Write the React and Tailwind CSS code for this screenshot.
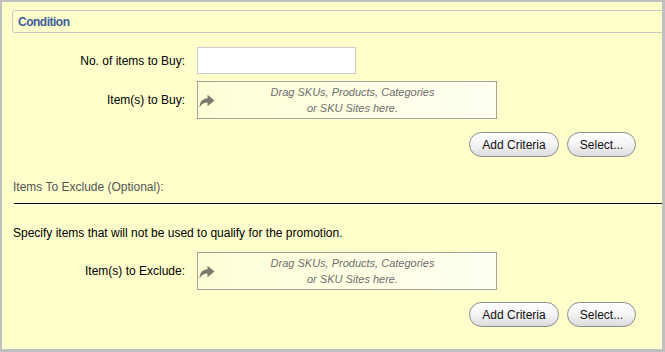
import React from "react";

const ArrowIcon = () => (
  <svg width="16" height="14" viewBox="0 0 16 14" className="shrink-0">
    <path d="M0.5 13.5 C0.8 7 4 4.5 8.5 4.5 L8.5 0.8 L15.5 6.5 L8.5 12.2 L8.5 8.6 C4.8 8.6 2.5 10 0.5 13.5 Z" fill="#7a7a6c" />
  </svg>
);

const DropZone = () => (
  <div className="flex h-[38px] w-[300px] items-center border border-[#a3a39a] bg-gradient-to-r from-[#ffffd6] to-[#fffff2]">
    <div className="ml-[1px] mt-[1px]">
      <ArrowIcon />
    </div>
    <div className="-ml-[6px] flex-1 text-center text-[11px] leading-[16px] italic text-[#6e6e6e]">
      Drag SKUs, Products, Categories
      <br />
      or SKU Sites here.
    </div>
  </div>
);

const Btn = ({ children, w }) => (
  <button className={`h-[25px] ${w} rounded-full border border-[#8c8c8c] bg-gradient-to-b from-white via-[#f4f4f4] to-[#dcdcdc] text-[12px] text-[#111]`}>
    {children}
  </button>
);

const Buttons = () => (
  <div className="flex justify-end gap-[8px] pr-[26px]">
    <Btn w="w-[90px]">Add Criteria</Btn>
    <Btn w="w-[69px]">Select...</Btn>
  </div>
);

const Row = ({ label, children }) => (
  <div className="flex items-center">
    <div className="w-[183px] text-right text-[12px] text-black">{label}</div>
    <div className="ml-[12px]">{children}</div>
  </div>
);

export default function App() {
  return (
    <div
      className="h-[352px] w-[665px] overflow-hidden border-t-2 border-l-2 border-r-[3px] border-b-[3px] border-[#c0c0c0] bg-[#ffffcc]"
      style={{ fontFamily: '"Liberation Sans", Arial, sans-serif' }}
    >
      <div className="-mr-[6px] ml-[10px] mt-[8px] flex h-[23px] items-center rounded-[3px] border border-[#c8c8c8] pl-[5px]">
        <span className="text-[12px] font-bold tracking-[-0.5px] text-[#3e5a9a]">Condition</span>
      </div>

      <div className="mt-[14px]">
        <Row label="No. of items to Buy:">
          <div className="h-[27px] w-[159px] border border-[#cccccc] bg-white" />
        </Row>
      </div>
      <div className="mt-[7px]">
        <Row label="Item(s) to Buy:">
          <DropZone />
        </Row>
      </div>
      <div className="mt-[13px]">
        <Buttons />
      </div>

      <div className="ml-[11px] mt-[21px] text-[12px] text-[#555]">Items To Exclude (Optional):</div>
      <div className="ml-[12px] mt-[7px] h-px bg-black" />
      <div className="ml-[11px] mt-[20px] text-[12px] text-black">
        Specify items that will not be used to qualify for the promotion.
      </div>

      <div className="mt-[10px]">
        <Row label="Item(s) to Exclude:">
          <DropZone />
        </Row>
      </div>
      <div className="mt-[12px]">
        <Buttons />
      </div>
    </div>
  );
}
